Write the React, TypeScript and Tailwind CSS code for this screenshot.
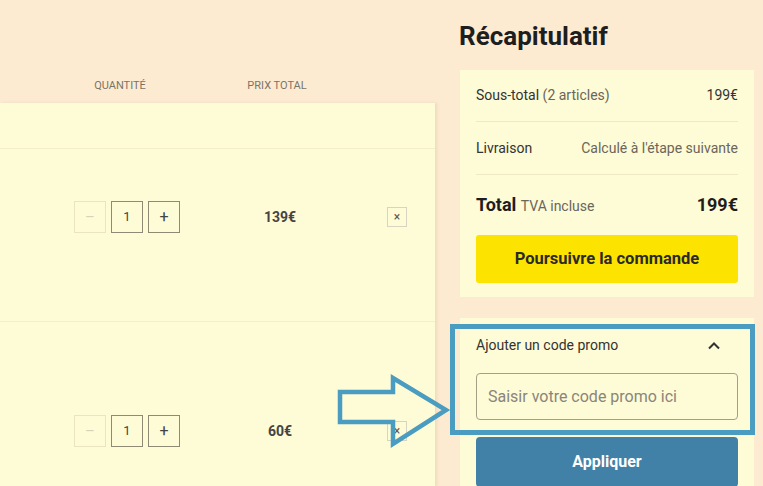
const rows = [
  { price: '139€', top: 'pt-[52px]', height: 'h-[173px] border-b border-[#f5eecb]' },
  { price: '60€', top: 'pt-[93px]', height: 'flex-1' },
]

const QtyControl = () => (
  <div className="flex gap-[5px]">
    <div className="flex h-8 w-8 items-center justify-center border border-[#ebe4c3] text-[15px] text-[#d8d2b8]">
      –
    </div>
    <div className="flex h-8 w-8 items-center justify-center border border-[#8f8a73] text-[13px] text-[#444]">
      1
    </div>
    <div className="flex h-8 w-8 items-center justify-center border border-[#8f8a73] text-[16px] text-[#444]">
      +
    </div>
  </div>
)

const App = () => {
  return (
    <div className="relative flex h-[486px] w-[763px] overflow-hidden bg-[#fdebd1] font-['Roboto',sans-serif] text-[#222]">
      <div className="flex w-[435px] flex-col">
        <div className="flex h-[103px] pt-[79px] text-[11px] uppercase leading-[14px] text-[#7a7466]">
          <p className="ml-[70px] w-[100px] text-center">Quantité</p>
          <p className="ml-[57px] w-[100px] text-center">Prix total</p>
        </div>
        <div className="flex flex-1 flex-col bg-[#fefbd7] shadow-[2px_0_3px_rgba(120,100,60,0.12)]">
          <div className="h-[46px] border-b border-[#f5eecb]" />
          {rows.map((row) => (
            <div key={row.price} className={`${row.height} ${row.top}`}>
              <div className="flex items-center">
                <div className="ml-[74px]">
                  <QtyControl />
                </div>
                <p className="ml-[50px] w-[100px] text-center text-[14px] font-bold text-[#444]">
                  {row.price}
                </p>
                <div className="ml-[57px] flex h-5 w-5 items-center justify-center border border-[#d9d4c2] text-[12px] leading-none text-[#555]">
                  ×
                </div>
              </div>
            </div>
          ))}
        </div>
      </div>

      <div className="ml-[25px] w-[294px]">
        <h1 className="mt-[21px] mb-[19px] -ml-px text-[26px] font-bold leading-[30px] text-[#1e1e1e]">
          Récapitulatif
        </h1>

        <div className="bg-[#fefbd7] px-4 pb-[14px]">
          <div className="flex h-[52px] items-center justify-between border-b border-[#efe8c6] text-[14px]">
            <p className="text-[#333]">
              Sous-total <span className="text-[#6b665a]">(2 articles)</span>
            </p>
            <p className="text-[#333]">199€</p>
          </div>
          <div className="flex h-[53px] items-center justify-between border-b border-[#efe8c6] text-[14px]">
            <p className="text-[#333]">Livraison</p>
            <p className="text-[#6b665a]">Calculé à l'étape suivante</p>
          </div>
          <div className="flex h-[60px] items-center justify-between pb-px">
            <p className="text-[18px] font-bold text-[#1e1e1e]">
              Total <span className="text-[14px] font-normal text-[#6b665a]">TVA incluse</span>
            </p>
            <p className="text-[18px] font-bold text-[#1e1e1e]">199€</p>
          </div>
          <button
            type="button"
            className="flex h-[48px] w-full items-center justify-center rounded-[3px] bg-[#fde300] text-[16.5px] font-bold text-[#2a2a2a]"
          >
            Poursuivre la commande
          </button>
        </div>

        <div className="mt-[21px] bg-[#fefbd7] px-4 pb-4">
          <div className="flex h-[55px] items-center justify-between">
            <p className="text-[14px] text-[#333]">Ajouter un code promo</p>
            <svg width="14" height="9" viewBox="0 0 14 9" className="mr-[17px]">
              <path d="M2 7.5 L7 2.5 L12 7.5" fill="none" stroke="#333" strokeWidth="2" />
            </svg>
          </div>
          <input
            className="h-[47px] w-full rounded-[4px] border border-[#a59f86] bg-transparent px-[11px] text-[16px] text-[#333] placeholder:text-[#8a857a] outline-none"
            placeholder="Saisir votre code promo ici"
          />
          <button
            type="button"
            className="mt-[17px] flex h-[50px] w-full items-center justify-center rounded-[4px] bg-[#4181a8] text-[16px] font-bold text-white"
          >
            Appliquer
          </button>
        </div>
      </div>

      <div className="absolute left-[450px] top-[324px] h-[111px] w-[305px] border-[5px] border-[#4a9cc1]" />
      <svg
        className="absolute left-[335px] top-[372px]"
        width="118"
        height="78"
        viewBox="0 0 118 78"
      >
        <path
          d="M5 20 L58 20 L58 6 L111 38 L58 72 L58 50 L5 50 Z"
          fill="none"
          stroke="#4a9cc1"
          strokeWidth="4.5"
        />
      </svg>
    </div>
  )
}

export default App
